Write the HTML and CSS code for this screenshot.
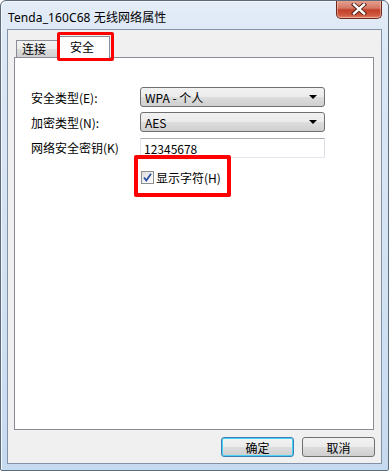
FILE: index.html
```html
<!DOCTYPE html>
<html lang="zh">
<head>
<meta charset="utf-8">
<title>Tenda_160C68 无线网络属性</title>
<link rel="stylesheet" href="styles.css">
</head>
<body>
<div class="window">
  <div class="titlebar">
    <span class="title">Tenda_160C68 无线网络属性</span>
    <div class="close">
      <svg width="16" height="12" viewBox="0 0 16 12">
        <path d="M3 1.5 L13 10.5 M13 1.5 L3 10.5" stroke="#4a1c12" stroke-width="4.2" stroke-linecap="square"/>
        <path d="M3 1.5 L13 10.5 M13 1.5 L3 10.5" stroke="#ffffff" stroke-width="2.4" stroke-linecap="square"/>
      </svg>
    </div>
  </div>
  <div class="client">
    <div class="tabs">
      <div class="tab">连接</div>
      <div class="tab active">安全</div>
    </div>
    <div class="panel">
      <div class="form">
        <span class="label">安全类型(E):</span>
        <div class="select"><span>WPA - 个人</span><span class="arrow"></span></div>
        <span class="label">加密类型(N):</span>
        <div class="select"><span>AES</span><span class="arrow"></span></div>
        <span class="label">网络安全密钥(K)</span>
        <div class="textbox">12345678</div>
        <span></span>
        <div class="checkrow">
          <span class="checkbox">
            <svg width="11" height="11" viewBox="0 0 11 11">
              <path d="M2 5.5 L4.3 8.5 L9 1.8" fill="none" stroke="#2a4fa0" stroke-width="1.8"/>
            </svg>
          </span>
          <span>显示字符(H)</span>
        </div>
      </div>
    </div>
    <div class="buttons">
      <div class="btn default">确定</div>
      <div class="btn">取消</div>
    </div>
  </div>
  <div class="mark mark-tab"></div>
  <div class="mark mark-check"></div>
</div>
</body>
</html>
```

FILE: styles.css
```css
html, body {
  margin: 0;
  padding: 0;
  background: #ffffff;
}

.window {
  position: relative;
  box-sizing: border-box;
  width: 389px;
  height: 471px;
  border: 1px solid #5d6b7c;
  border-radius: 6px 6px 2px 2px;
  padding: 0 6px 6px 6px;
  display: flex;
  flex-direction: column;
  background: linear-gradient(to bottom, #e4edf8 0%, #dbe7f5 10%, #d2e2f3 60%, #c6daef 100%);
  box-shadow: inset 1px 1px 0 #f4f8fd;
  overflow: hidden;
}

.titlebar {
  height: 28px;
  display: flex;
  align-items: flex-start;
  padding-left: 1px;
}

.title {
  font-family: "Noto Sans", "Noto Sans CJK SC", sans-serif;
  font-size: 12px;
  color: #000;
  margin-top: 7px;
  letter-spacing: 0.1px;
}

.close {
  margin-left: auto;
  margin-top: -1px;
  width: 46px;
  height: 19px;
  box-sizing: border-box;
  border: 1px solid #6b2a1c;
  border-top: none;
  border-radius: 0 0 5px 5px;
  background: linear-gradient(to bottom, #e8a593 0%, #d47865 45%, #c2402a 55%, #cf5a3f 85%, #e08a6c 100%);
  box-shadow: inset 0 0 0 1px rgba(255, 220, 210, 0.45);
  display: flex;
  align-items: center;
  justify-content: center;
}

.client {
  flex: 1;
  box-sizing: border-box;
  background: #f0f0f0;
  border: 1px solid #8392a6;
  padding: 6px 7px 6px 6px;
  display: flex;
  flex-direction: column;
}

.tabs {
  height: 21px;
  display: flex;
  align-items: flex-end;
  padding-left: 2px;
  position: relative;
  z-index: 1;
}

.tab {
  font-family: "Noto Sans CJK SC", sans-serif;
  font-size: 12px;
  line-height: 15px;
  box-sizing: border-box;
  height: 17px;
  width: 45px;
  padding-left: 5px;
  border: 1px solid #898c95;
  border-bottom: none;
  background: linear-gradient(to bottom, #f2f2f2 0%, #ebebeb 50%, #dddddd 51%, #cfcfcf 100%);
  color: #000;
}

.tab.active {
  height: 22px;
  width: 51px;
  margin-left: -2px;
  margin-bottom: -1px;
  padding-left: 10px;
  padding-top: 2px;
  background: #ffffff;
}

.panel {
  flex: 1;
  background: #ffffff;
  border: 1px solid #898c95;
  padding: 29px 0 0 16px;
}

.form {
  display: grid;
  grid-template-columns: 109px 185px;
  grid-template-rows: 20px 20px 21px auto;
  row-gap: 5px;
  align-items: center;
  font-family: "Noto Sans CJK SC", sans-serif;
  font-size: 12px;
  color: #000;
}

.form .textbox {
  margin-top: 1px;
}

.label {
  white-space: nowrap;
}

.select {
  box-sizing: border-box;
  height: 20px;
  border: 1px solid #707070;
  border-radius: 3px;
  background: linear-gradient(to bottom, #f2f2f2 0%, #ebebeb 50%, #dddddd 51%, #cfcfcf 100%);
  display: flex;
  align-items: center;
  padding: 0 7px 0 4px;
  font-family: "Noto Sans CJK SC", sans-serif;
  font-size: 12px;
}

.arrow {
  margin-left: auto;
  width: 0;
  height: 0;
  border-left: 4px solid transparent;
  border-right: 4px solid transparent;
  border-top: 4px solid #000;
}

.textbox {
  box-sizing: border-box;
  height: 20px;
  border: 1px solid #abadb3;
  border-top-color: #abadb3;
  border-left-color: #e2e3ea;
  border-right-color: #dbdfe6;
  border-bottom-color: #e3e9ef;
  background: #ffffff;
  padding: 0 3px;
  display: flex;
  align-items: center;
}

.checkrow {
  margin-top: 5px;
  display: flex;
  align-items: center;
  gap: 2px;
  height: 18px;
}

.checkbox {
  box-sizing: border-box;
  width: 13px;
  height: 13px;
  border: 1px solid #8e8f8f;
  background: linear-gradient(135deg, #dcdcdc 0%, #f4f4f4 60%, #ffffff 100%);
  display: flex;
  align-items: center;
  justify-content: center;
  margin-left: 1px;
}

.buttons {
  display: flex;
  justify-content: flex-end;
  gap: 8px;
  margin-top: 7px;
  margin-right: -1px;
}

.btn {
  box-sizing: border-box;
  width: 73px;
  height: 20px;
  border: 1px solid #707070;
  border-radius: 3px;
  background: linear-gradient(to bottom, #f2f2f2 0%, #ebebeb 50%, #dddddd 51%, #cfcfcf 100%);
  font-family: "Noto Sans CJK SC", sans-serif;
  font-size: 12px;
  display: flex;
  align-items: center;
  justify-content: center;
  color: #000;
}

.btn.default {
  border-color: #3c7fb1;
  box-shadow: inset 0 0 0 1px #48d2f8;
}

.mark {
  position: absolute;
  box-sizing: border-box;
  border: 3px solid #ff0000;
  border-radius: 2px;
  z-index: 5;
}

.mark-tab {
  left: 56px;
  top: 31px;
  width: 57px;
  height: 29px;
}

.mark-check {
  left: 133px;
  top: 154px;
  width: 97px;
  height: 42px;
  border-width: 4px;
}
```
